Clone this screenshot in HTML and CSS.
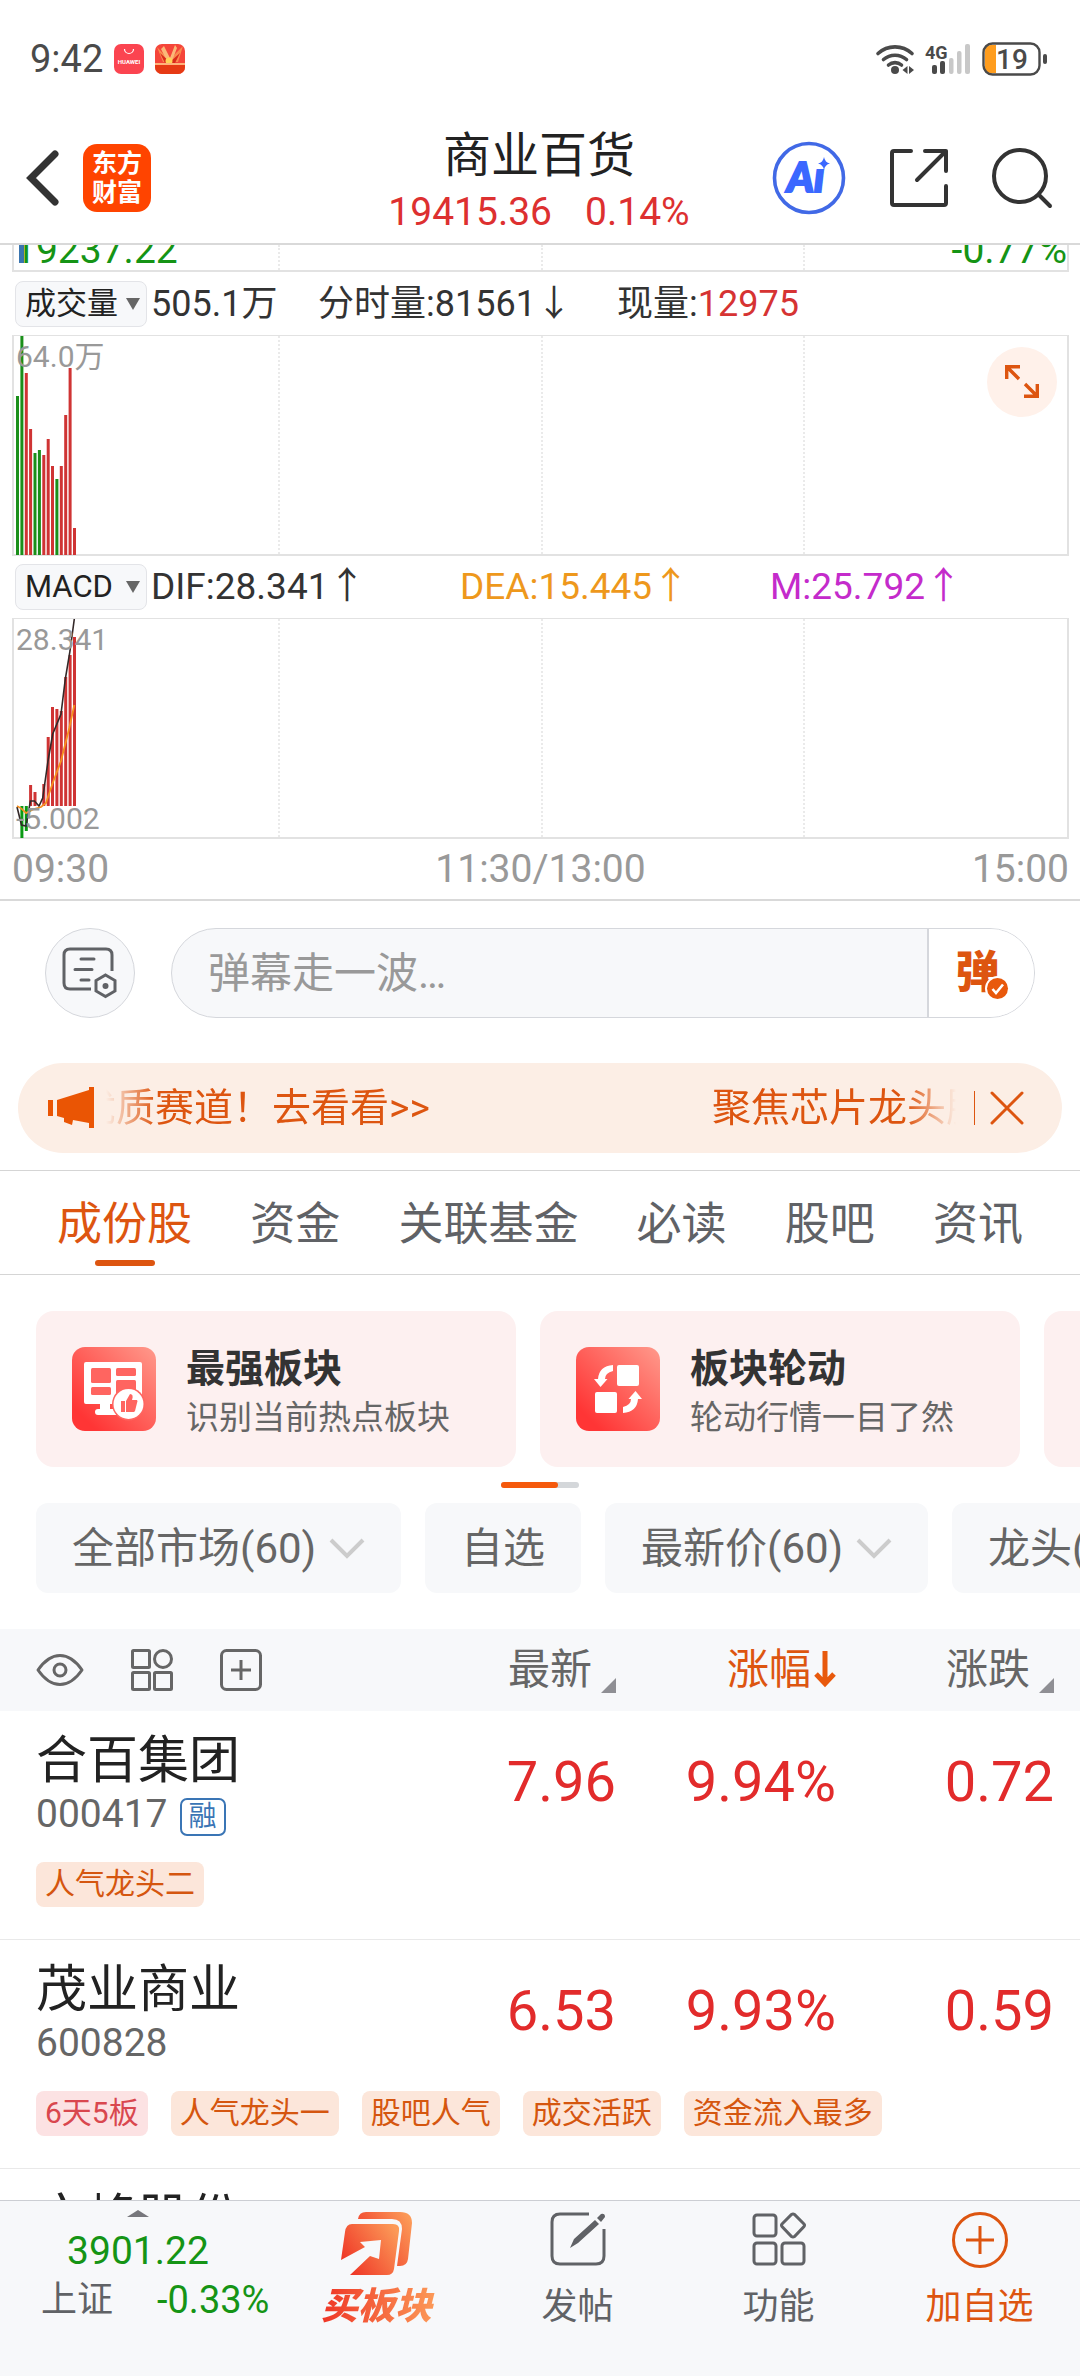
FILE: index.html
```html
<!DOCTYPE html>
<html lang="zh-CN">
<head>
<meta charset="utf-8">
<meta name="viewport" content="width=device-width">
<title>商业百货</title>
<link rel="stylesheet" href="styles.css">
</head>
<body>
<div class="status">
  <div class="status-side">
    <span class="clock">9:42</span>
    <svg class="app-dot" width="30" height="30" viewBox="0 0 30 30"><rect width="30" height="30" rx="7" fill="#fb4450"/><path d="M10.500 5a4.500 4.500 0 0 0 9 0" fill="none" stroke="#fff" stroke-width="1.200"/><text x="15" y="20" text-anchor="middle" font-size="6" font-weight="700" fill="#fff" font-family="Roboto, sans-serif">HUAWEI</text></svg>
    <svg class="app-dot" width="30" height="30" viewBox="0 0 30 30"><defs><clipPath id="pot"><rect width="30" height="30" rx="7"/></clipPath></defs><g clip-path="url(#pot)"><rect width="30" height="30" fill="#f5453a"/><path d="M2 3l12 13L28 2l-5 16H8z" fill="#f98a4e"/><path d="M9 2l6 12 5-13 2 3-5 13h-5L6 5z" fill="#fbb878"/><path d="M5 9l10 9 10-9-5 10H10z" fill="#d92a1c"/><circle cx="14" cy="17" r="3.500" fill="#ffd257"/><path d="M0 20h30v10H0z" fill="#e63a14"/><path d="M0 19h30v2H0z" fill="#ffb27a"/></g></svg>
  </div>
  <div class="status-side">
    <svg width="38" height="32" viewBox="0 0 38 32" fill="none" stroke="#4a4a4a" stroke-width="3.600" stroke-linecap="round"><path d="M2 10.500a25 25 0 0 1 34 0M7.500 16.500a17.500 17.500 0 0 1 23 0M12.500 22a10 10 0 0 1 13 0"/><circle cx="19" cy="27" r="4" fill="#4a4a4a" stroke="none"/><path d="M31.500 23v8l-5-4zM33 23v8l5-4z" fill="#4a4a4a" stroke="none"/></svg>
    <svg class="signal" width="46" height="32" viewBox="0 0 46 32"><text x="0" y="16" font-size="18" font-weight="700" fill="#4a4a4a" font-family="Roboto, sans-serif">4G</text><g fill="#4a4a4a"><rect x="7" y="22" width="5" height="9" rx="2"/><rect x="15" y="18" width="5" height="13" rx="2"/></g><g fill="#c8c8c8"><rect x="24" y="15" width="4.500" height="16" rx="2"/><rect x="32" y="8" width="4.500" height="23" rx="2"/><rect x="40" y="1" width="5" height="30" rx="2"/></g></svg>
    <svg class="battery" width="66" height="34" viewBox="0 0 66 34"><path d="M9 3h5v28H9q-6 0-6-6V9q0-6 6-6z" fill="#ff9d1e"/><rect x="1.500" y="1.500" width="56" height="31" rx="9" fill="none" stroke="#4a4a4a" stroke-width="2.400"/><rect x="61" y="12" width="4" height="10" rx="2" fill="#4a4a4a"/><text x="30" y="27" text-anchor="middle" font-size="28" font-weight="500" fill="#4a4a4a" font-family="Roboto, sans-serif">19</text></svg>
  </div>
</div>

<header class="header">
  <div class="header-left">
    <button class="plain" aria-label="返回"><svg width="34" height="60" viewBox="0 0 34 60"><path d="M29 6L5 30l24 24" fill="none" stroke="#333" stroke-width="7" stroke-linecap="round" stroke-linejoin="miter"/></svg></button>
    <a class="brand" href="#">东方<br>财富</a>
  </div>
  <div class="header-title">
    <h1>商业百货</h1>
    <p><span>19415.36</span><span>0.14%</span></p>
  </div>
  <div class="header-right">
    <button class="plain" aria-label="AI"><svg width="74" height="74" viewBox="0 0 74 74"><circle cx="37" cy="37" r="34.500" fill="none" stroke="#4169e6" stroke-width="3.600"/><text x="15" y="51" font-family="Lato, sans-serif" font-size="41" font-weight="900" font-style="italic" fill="#3b68ff" stroke="#3b68ff" stroke-width="2">Aı</text><path d="M52 16q1 5.500 6 6.500-5 1-6 6.500-1-5.500-6-6.500 5-1 6-6.500z" fill="#3b68ff"/></svg></button>
    <button class="plain" aria-label="分享"><svg width="60" height="60" viewBox="0 0 60 60" fill="none" stroke="#333" stroke-width="4" stroke-linecap="round" stroke-linejoin="round"><path d="M22 3H5q-2 0-2 2v50q0 2 2 2h50q2 0 2-2V38M36 3h21v20M57 3L28 32"/></svg></button>
    <button class="plain" aria-label="搜索"><svg width="60" height="60" viewBox="0 0 60 60" fill="none" stroke="#333" stroke-width="4" stroke-linecap="round"><circle cx="28" cy="28" r="26"/><path d="M47 47l11 11"/></svg></button>
  </div>
</header>

<main class="main">
  <section class="charts">
    <div class="plot plot-tail">
      <i></i><i></i><i></i><i></i>
      <svg class="series" width="66" height="28" viewBox="0 0 66 28"><rect x="6" width="5" height="18" fill="#3a75b0"/></svg>
      <span class="tail-low">19237.22</span><span class="tail-pct">-0.77%</span>
    </div>
    <div class="legend">
      <label class="pick"><select aria-label="指标一"><option>成交量</option></select><b></b></label>
      <span>505.1万</span><span>分时量:81561↓</span><span>现量:<em>12975</em></span>
    </div>
    <div class="plot">
      <i></i><i></i><i></i><i></i>
      <svg class="series" width="66" height="219" viewBox="0 0 66 219">
        <g fill="#1a8f1a"><rect x="3" y="60" width="3" height="159"/><rect x="7.400" y="0" width="3" height="219"/><rect x="20.500" y="117" width="3" height="102"/><rect x="24.900" y="114" width="3" height="105"/><rect x="42.400" y="143" width="3" height="76"/></g>
        <g fill="#cf3434"><rect x="11.800" y="37" width="3" height="182"/><rect x="16.100" y="93" width="3" height="126"/><rect x="29.300" y="119" width="3" height="100"/><rect x="33.700" y="103" width="3" height="116"/><rect x="38" y="130" width="3" height="89"/><rect x="46.800" y="130" width="3" height="89"/><rect x="51.200" y="79" width="3" height="140"/><rect x="55.600" y="32" width="3" height="187"/><rect x="60" y="192" width="3" height="27"/></g>
      </svg>
      <span class="plot-max">64.0万</span>
      <button class="expand" aria-label="全屏"><svg width="36" height="36" viewBox="0 0 36 36" fill="none" stroke="#dd5510" stroke-width="3.400"><path d="M2.700 15V2.700H16M3 3l12 12M33.300 20v12.300H20M33 32L21 20"/></svg></button>
    </div>
    <div class="legend legend-macd">
      <label class="pick"><select aria-label="指标二"><option>MACD</option></select><b></b></label>
      <span>DIF:28.341↑</span><span class="leg-dea">DEA:15.445↑</span><span class="leg-m">M:25.792↑</span>
    </div>
    <div class="plot">
      <i></i><i></i><i></i><i></i>
      <svg class="series" width="66" height="219" viewBox="0 0 66 219">
        <g fill="#0a9a14"><rect x="7.400" y="187" width="3" height="32"/><rect x="11.800" y="187" width="3" height="25"/></g>
        <g fill="#cf3434"><rect x="16.100" y="166" width="3" height="21"/><rect x="20.500" y="173" width="3" height="14"/><rect x="29.300" y="165" width="3" height="22"/><rect x="33.700" y="118" width="3" height="69"/><rect x="38" y="88" width="3" height="99"/><rect x="42.400" y="90" width="3" height="97"/><rect x="46.800" y="92" width="3" height="95"/><rect x="51.200" y="58" width="3" height="129"/><rect x="55.600" y="36" width="3" height="151"/><rect x="60" y="18" width="3" height="169"/></g>
        <path d="M4 188l4.500 18 4.500 1 4.400-25h4l4.600 5 3.700-8L35 142l4.700-27L48 95l4.300-35L57 32l4.300-32" fill="none" stroke="#332828" stroke-width="1.600"/>
        <path d="M4 187q5 2 9 7l8-4 7-2 5-4 6.700-20L48 142l8.300-33 5-23" fill="none" stroke="#f7901e" stroke-width="1.800"/>
      </svg>
      <span class="plot-max">28.341</span><span class="plot-min">-5.002</span>
    </div>
    <div class="axis"><span>09:30</span><span>11:30/13:00</span><span>15:00</span></div>
  </section>

  <form class="danmu">
    <button type="button" class="danmu-set" aria-label="弹幕设置"><svg width="56" height="52" viewBox="0 0 56 52" fill="none" stroke="#606266" stroke-width="3"><path d="M29 42H8q-6 0-6-6V8q0-6 6-6h36q6 0 6 6v16"/><path d="M19 12h13M13 22.500h17M19 33h8" stroke-linecap="round"/><path d="M43.500 28l9.500 5.500v10.500l-9.500 5.500-9.500-5.500V33.500z"/><circle cx="43.500" cy="39" r="3" fill="#606266" stroke="none"/></svg></button>
    <div class="danmu-box">
      <input type="text" aria-label="弹幕" placeholder="弹幕走一波…">
      <button type="button" class="danmu-on">弹<svg width="25" height="25" viewBox="0 0 25 25"><circle cx="12.500" cy="12.500" r="12.500" fill="#fff"/><circle cx="12.500" cy="12.500" r="10.500" fill="#e8590c"/><path d="M7.500 13l3.500 4 7-8.500" fill="none" stroke="#fff" stroke-width="2.600"/></svg></button>
    </div>
  </form>

  <div class="notice">
    <svg width="46" height="42" viewBox="0 0 46 42" fill="#ea5504"><path d="M0 13h5v16H0zM9 13l32-10V0h5v41h-5v-5l-16-3-1 5-8-3v-4l-7-2z"/></svg>
    <div class="notice-text"><span>优质赛道！去看看&gt;&gt;</span><span>聚焦芯片龙头股</span></div>
    <button class="plain notice-close" aria-label="关闭"><svg width="34" height="34" viewBox="0 0 34 34"><path d="M2 2l30 30M32 2L2 32" stroke="#dd5510" stroke-width="3" stroke-linecap="round"/></svg></button>
  </div>

  <nav class="tabs">
    <a class="on" href="#">成份股</a><a href="#">资金</a><a href="#">关联基金</a><a href="#">必读</a><a href="#">股吧</a><a href="#">资讯</a>
  </nav>

  <div class="cards">
    <a class="card" href="#">
      <svg width="84" height="84" viewBox="0 0 84 84"><defs><linearGradient id="g1" x1="0" y1="1" x2="1" y2="0"><stop offset=".15" stop-color="#ff3535"/><stop offset="1" stop-color="#ff9a8c"/></linearGradient></defs><rect width="84" height="84" rx="13" fill="url(#g1)"/><path d="M14 15h54q2 0 2 2v38q0 2-2 2H38v5h6v6H26q-3 0-3-3t3-3h2v-5H14q-2 0-2-2V17q0-2 2-2z" fill="#fff"/><g fill="#ff6560"><rect x="19" y="21" width="20" height="15" rx="1.500"/><rect x="19" y="40" width="20" height="8" rx="1.500"/><rect x="44" y="21" width="20" height="8" rx="1.500"/><rect x="44" y="33" width="20" height="16" rx="1.500"/></g><circle cx="56.500" cy="57" r="16.500" fill="#ff6560"/><circle cx="56.500" cy="57" r="15" fill="#fff"/><path d="M49 54h4v11h-4zM54 54l4-7q4 0 2 6h5q1 1 0 3l-2 8-1 1h-8z" fill="#ff6560"/></svg>
      <div><strong>最强板块</strong><span>识别当前热点板块</span></div>
    </a>
    <a class="card" href="#">
      <svg width="84" height="84" viewBox="0 0 84 84"><rect width="84" height="84" rx="13" fill="url(#g1)"/><g fill="#fff"><rect x="41" y="18" width="22" height="21" rx="2"/><rect x="19" y="45" width="22" height="21" rx="2"/><path d="M37 18v6q-8 2-8 8h2.500L24.500 40 18 32h4q1-13 15-14zM47 66v-6q8-2 8-8h-2.500L59.500 44 66 52h-4q-1 13-15 14z"/></g></svg>
      <div><strong>板块轮动</strong><span>轮动行情一目了然</span></div>
    </a>
    <a class="card" href="#" aria-label="更多"></a>
  </div>
  <div class="pager"><i></i></div>

  <div class="chips">
    <label class="chip"><select aria-label="市场"><option>全部市场(60)</option></select><svg width="36" height="22" viewBox="0 0 36 22"><path d="M2 2l16 16L34 2" fill="none" stroke="#ccc" stroke-width="4"/></svg></label>
    <button class="chip">自选</button>
    <label class="chip"><select aria-label="价格"><option>最新价(60)</option></select><svg width="36" height="22" viewBox="0 0 36 22"><path d="M2 2l16 16L34 2" fill="none" stroke="#ccc" stroke-width="4"/></svg></label>
    <label class="chip"><select aria-label="龙头"><option>龙头(3)</option></select></label>
  </div>

  <table class="stocks">
    <colgroup><col><col class="c-last"><col class="c-pct"><col class="c-diff"></colgroup>
    <thead>
      <tr>
        <th><div class="tools">
          <button class="plain" aria-label="显示"><svg width="48" height="42" viewBox="0 0 48 42" fill="none" stroke="#666" stroke-width="3"><path d="M2 21Q12 6.500 24 6.500T46 21Q36 35.500 24 35.500T2 21z" stroke-linejoin="round"/><circle cx="24" cy="21" r="6"/></svg></button>
          <button class="plain" aria-label="布局"><svg width="42" height="42" viewBox="0 0 42 42" fill="none" stroke="#666" stroke-width="3"><rect x="1.500" y="1.500" width="17" height="17" rx="1"/><circle cx="32" cy="10" r="8.500"/><rect x="1.500" y="23.500" width="17" height="17" rx="1"/><rect x="23.500" y="23.500" width="17" height="17" rx="1"/></svg></button>
          <button class="plain" aria-label="添加"><svg width="42" height="42" viewBox="0 0 42 42" fill="none" stroke="#666" stroke-width="3"><rect x="1.500" y="1.500" width="39" height="39" rx="5"/><path d="M21 11v20M11 21h20"/></svg></button>
        </div></th>
        <th><button class="sort">最新<svg width="15" height="15" viewBox="0 0 15 15"><path d="M15 0v15H0z" fill="#8f8f94"/></svg></button></th>
        <th><button class="sort on">涨幅<svg width="22" height="36" viewBox="0 0 22 36"><path d="M11 0v32M2 23l9 9.500 9-9.500" fill="none" stroke="#e8590c" stroke-width="5"/></svg></button></th>
        <th><button class="sort">涨跌<svg width="15" height="15" viewBox="0 0 15 15"><path d="M15 0v15H0z" fill="#8f8f94"/></svg></button></th>
      </tr>
    </thead>
    <tbody>
      <tr><td class="who"><a href="#">合百集团</a><div><span>000417</span><mark>融</mark></div></td><td class="num">7.96</td><td class="num">9.94%</td><td class="num">0.72</td></tr>
      <tr><td class="tags" colspan="4"><div><span>人气龙头二</span></div></td></tr>
    </tbody>
    <tbody>
      <tr><td class="who"><a href="#">茂业商业</a><div><span>600828</span></div></td><td class="num">6.53</td><td class="num">9.93%</td><td class="num">0.59</td></tr>
      <tr><td class="tags" colspan="4"><div><span class="hot">6天5板</span><span>人气龙头一</span><span>股吧人气</span><span>成交活跃</span><span>资金流入最多</span></div></td></tr>
    </tbody>
    <tbody>
      <tr><td class="who"><a href="#">文峰股份</a></td><td></td><td></td><td></td></tr>
    </tbody>
  </table>
</main>

<footer class="dock">
  <div class="index">
    <svg width="22" height="7" viewBox="0 0 22 7"><path d="M0 7L11 0l11 7z" fill="#77777c"/></svg>
    <strong>3901.22</strong>
    <p><span>上证</span><em>-0.33%</em></p>
  </div>
  <a class="buy" href="#">
    <svg width="72" height="64" viewBox="0 0 72 64"><defs><linearGradient id="g2" x1="0" y1=".8" x2="1" y2=".2"><stop stop-color="#ee3124"/><stop offset="1" stop-color="#fc9a58"/></linearGradient></defs><path d="M17 7q1-7 8-7h34q12 0 12 11l-4 36q-1 7-8 7h-3l5-37q0-10-10-10z" fill="url(#g2)"/><path d="M11 12h41q7 0 6 7l-5 38q-1 6-7 6H9l20-19 9 3 2-19-21 2 5 5-24 13 4-28q1-8 7-8z" fill="url(#g2)"/></svg>
    <span>买板块</span>
  </a>
  <a href="#">
    <svg width="56" height="56" viewBox="0 0 56 56"><path d="M39 2H10q-8 0-8 8v34q0 8 8 8h36q8 0 8-8V17" fill="none" stroke="#606266" stroke-width="3"/><path d="M20 36l4-9L45 8l4 4-21 19zM47 6l4-4q4-1 4 3l-4 5z" fill="#606266"/></svg>
    <span>发帖</span>
  </a>
  <a href="#">
    <svg width="56" height="56" viewBox="0 0 56 56" fill="none" stroke="#606266" stroke-width="3"><rect x="3" y="3" width="22" height="21" rx="3"/><rect x="3" y="31" width="22" height="21" rx="3"/><rect x="31" y="31" width="22" height="21" rx="3"/><path d="M40.500 2.500q1.500-1 3 0L53 12q1 1 0 2.500l-9.500 10q-1.500 1-3 0L31 14.500q-1-1.500 0-2.500z"/></svg>
    <span>功能</span>
  </a>
  <a class="add" href="#">
    <svg width="56" height="56" viewBox="0 0 56 56" fill="none" stroke="#dd5510" stroke-width="3"><circle cx="28" cy="28" r="26.500"/><path d="M28 14v28M14 28h28"/></svg>
    <span>加自选</span>
  </a>
</footer>
</body>
</html>
```
FILE: styles.css
```css
* { box-sizing: border-box; margin: 0; padding: 0; }
body {
  height: 100vh;
  display: flex;
  flex-direction: column;
  overflow: hidden;
  background: #fff;
  color: #2b2b2b;
  font-family: Roboto, "Noto Sans CJK SC", sans-serif;
}
a { color: inherit; text-decoration: none; }
em, i { font-style: normal; }
svg { display: block; flex: none; overflow: visible; }
button, select, input { font: inherit; color: inherit; border: 0; background: none; border-radius: 0; }
select { appearance: none; outline: 0; }
.plain { display: block; }

/* status bar */
.status {
  flex: none;
  height: 118px;
  padding: 0 32px 0 30px;
  display: flex;
  align-items: center;
  justify-content: space-between;
}
.status-side { display: flex; align-items: center; gap: 11px; }
.clock { font-size: 38px; line-height: 48px; color: #4a4a4a; }

/* header */
.header {
  flex: none;
  height: 127px;
  padding: 0 28px 8px 26px;
  display: grid;
  grid-template-columns: 1fr auto 1fr;
  align-items: center;
  border-bottom: 2px solid #d9d9d9;
}
.header-left { display: flex; align-items: center; gap: 23px; }
.brand {
  width: 68px;
  height: 68px;
  padding-top: 5px;
  border-radius: 14px;
  background: #ff4400;
  color: #fff;
  font-size: 25px;
  line-height: 29px;
  font-weight: 700;
  text-align: center;
}
.header-title { padding-top: 8px; text-align: center; }
.header-title h1 { font-size: 48px; line-height: 60px; font-weight: 400; color: #222; }
.header-title p {
  display: flex;
  justify-content: center;
  gap: 33px;
  font-size: 39px;
  line-height: 52px;
  color: #dd3030;
}
.header-right { display: flex; align-items: center; justify-content: flex-end; gap: 43px; }

.main { flex: 1; min-height: 0; overflow: hidden; }

/* charts */
.charts { padding: 0 11px 0 12px; border-bottom: 2px solid #d9d9d9; }
.plot {
  position: relative;
  height: 221px;
  padding-left: 4px;
  display: grid;
  grid-template-columns: repeat(4, 1fr);
  border: 2px solid #e2e2e2;
  border-top-width: 1px;
}
.plot i { border-right: 2px dotted #eaeaea; }
.plot i:nth-child(4) { border-right: 0; }
.plot-tail { height: 27px; border-top: 0; overflow: hidden; }
.series { position: absolute; left: -1px; top: 0; }
.tail-low, .tail-pct {
  position: absolute;
  bottom: 0;
  font-size: 39px;
  line-height: 39px;
  color: #159415;
}
.tail-low { left: 0; }
.tail-pct { right: 0; }
.plot-max, .plot-min {
  position: absolute;
  left: 2px;
  font-size: 30px;
  line-height: 36px;
  color: #999;
}
.plot-max { top: 3px; }
.plot-min { bottom: 0; }
.expand {
  position: absolute;
  top: 11px;
  right: 10px;
  width: 70px;
  height: 70px;
  border-radius: 50%;
  background: #fff1ea;
  display: grid;
  place-items: center;
}
.legend {
  height: 63px;
  padding-left: 3px;
  display: grid;
  grid-template-columns: 136px 167px 299px 1fr;
  align-items: center;
  font-size: 36px;
  line-height: 46px;
  color: #333;
}
.legend em { color: #d63333; }
.legend-macd { height: 62px; grid-template-columns: 136px 309px 310px 1fr; }
.legend-macd span { font-size: 37px; }
.leg-dea { color: #ee981c; }
.leg-m { color: #c42bcb; }
.pick {
  width: 132px;
  height: 46px;
  padding-left: 9px;
  display: flex;
  align-items: center;
  gap: 7px;
  background: #f7f8fa;
  border: 1px solid #e3e4e8;
  border-radius: 8px;
  color: #222;
}
.pick select { width: 94px; font-size: 31px; line-height: 42px; }
.pick b { border: 7px solid transparent; border-top: 12px solid #666; border-bottom: 0; }
.axis {
  height: 60px;
  display: flex;
  align-items: center;
  justify-content: space-between;
  font-size: 39px;
  line-height: 52px;
  color: #999;
}

/* bullet comments */
.danmu { padding: 27px 45px 0; display: flex; gap: 36px; }
.danmu-set {
  width: 90px;
  height: 90px;
  flex: none;
  display: grid;
  place-items: center;
  border: 1px solid #d5d7dc;
  border-radius: 50%;
  background: #f7f8fa;
}
.danmu-box {
  flex: 1;
  height: 90px;
  display: flex;
  overflow: hidden;
  border: 1px solid #d5d7dc;
  border-radius: 45px;
  background: #f7f8fa;
}
.danmu-box input { flex: 1; min-width: 0; padding-left: 36px; font-size: 42px; outline: 0; }
.danmu-box input::placeholder { color: #999; opacity: 1; }
.danmu-on {
  position: relative;
  width: 107px;
  padding: 0 8px 8px 0;
  border-left: 2px solid #d5d7dc;
  background: #fff;
  color: #dd5510;
  font-size: 44px;
  font-weight: 900;
}
.danmu-on svg { position: absolute; left: 56px; bottom: 16px; }

/* notice */
.notice {
  height: 90px;
  margin: 45px 18px 17px;
  padding: 0 38px 0 30px;
  display: flex;
  align-items: center;
  border-radius: 45px;
  background: #fceee5;
  color: #dd5510;
  font-size: 39px;
  line-height: 50px;
}
.notice-text {
  flex: 1;
  min-width: 0;
  height: 50px;
  margin: 0 18px 0 12px;
  display: flex;
  gap: 282px;
  justify-content: center;
  overflow: hidden;
  white-space: nowrap;
  -webkit-mask-image: linear-gradient(90deg, transparent, #000 50px, #000 calc(100% - 50px), transparent);
  mask-image: linear-gradient(90deg, transparent, #000 50px, #000 calc(100% - 50px), transparent);
}
.notice-close { padding-left: 15px; border-left: 1px solid #dd5510; }

/* tabs */
.tabs {
  height: 105px;
  padding: 0 57px;
  display: flex;
  justify-content: space-between;
  border-top: 1px solid #d5d5d5;
  border-bottom: 1px solid #d5d5d5;
  font-size: 45px;
  line-height: 108px;
  color: #606266;
}
.tabs a { display: flex; flex-direction: column; align-items: center; }
.tabs .on { color: #dd5510; }
.tabs .on::after { content: ""; width: 60px; height: 6px; margin-top: -19px; border-radius: 3px; background: #dd5510; }

/* cards */
.cards { padding: 36px 0 0 36px; display: flex; gap: 24px; overflow: hidden; }
.card {
  flex: none;
  width: 480px;
  height: 156px;
  padding-left: 36px;
  display: flex;
  align-items: center;
  gap: 30px;
  border-radius: 18px;
  background: #fdf0f0;
}
.card div { padding-top: 8px; display: flex; flex-direction: column; gap: 4px; }
.card strong { font-size: 39px; line-height: 46px; font-weight: 700; color: #333; }
.card span { font-size: 33px; line-height: 44px; color: #666; }
.pager { width: 78px; height: 6px; margin: 15px auto; border-radius: 3px; background: #d4d7da; }
.pager i { display: block; width: 57px; height: 6px; border-radius: 3px; background: #f5590c; }

/* filter chips */
.chips { padding-left: 36px; display: flex; gap: 24px; overflow: hidden; }
.chip {
  flex: none;
  height: 90px;
  padding: 2px 36px 0;
  display: flex;
  align-items: center;
  gap: 12px;
  border-radius: 12px;
  background: #f7f8fa;
  color: #666;
  font-size: 42px;
  line-height: 54px;
}

/* stock table */
.stocks { width: 100%; margin-top: 36px; border-collapse: collapse; table-layout: fixed; }
.c-last { width: 216px; }
.c-pct { width: 220px; }
.c-diff { width: 244px; }
.stocks th { height: 82px; background: #f7f8fa; font-weight: 400; vertical-align: middle; }
.stocks th:last-child, .stocks td.num:last-child { padding-right: 26px; }
.tools { padding-left: 36px; display: flex; gap: 47px; }
.sort {
  margin-left: auto;
  display: flex;
  align-items: flex-end;
  gap: 9px;
  font-size: 42px;
  line-height: 50px;
  color: #666;
}
.sort svg { margin-bottom: 2px; }
.sort.on { gap: 3px; color: #dd5510; align-items: center; }
.who { padding: 21px 0 12px 36px; }
.who a { display: block; font-size: 51px; line-height: 58px; color: #222; white-space: nowrap; }
.who div { display: flex; align-items: center; gap: 12px; font-size: 39px; line-height: 48px; color: #666; }
.who mark {
  height: 38px;
  margin-top: 6px;
  padding: 0 7px;
  border: 2px solid #3a75b5;
  border-radius: 7px;
  background: none;
  color: #3a75b5;
  font-size: 28px;
  line-height: 33px;
}
.num { padding-top: 31px; vertical-align: top; text-align: right; font-size: 56px; line-height: 80px; color: #e22b2b; }
.tags { padding: 12px 36px 32px; border-bottom: 1px solid #e9e9e9; }
.tags div { display: flex; gap: 23px; }
.tags span {
  height: 45px;
  padding: 0 9px;
  border-radius: 8px;
  background: #fce6da;
  color: #d5560f;
  font-size: 30px;
  line-height: 44px;
}
.tags .hot { background: #fce2e3; color: #d9474e; }

/* bottom dock */
.dock {
  flex: none;
  height: 176px;
  display: grid;
  grid-template-columns: 276px repeat(4, 1fr);
  border-top: 1px solid #ccced3;
  background: #f7f8fa;
  color: #606266;
  font-size: 36px;
  line-height: 46px;
}
.dock > a { padding-top: 11px; display: flex; flex-direction: column; align-items: center; gap: 16px; }
.dock .add { color: #dd5510; }
.dock .buy { gap: 8px; }
.buy span {
  padding: 0 4px;
  font-size: 37px;
  font-weight: 900;
  font-style: italic;
  background: linear-gradient(90deg, #ee3124, #fc9a58);
  -webkit-background-clip: text;
  background-clip: text;
  color: transparent;
}
.index { padding-top: 9px; display: flex; flex-direction: column; align-items: center; }
.index strong { margin-top: 10px; font-size: 39px; line-height: 48px; font-weight: 400; color: #159415; }
.index p { display: flex; gap: 44px; margin-left: 41px; align-self: flex-start; line-height: 50px; }
.index em { font-size: 38px; color: #159415; }
```
